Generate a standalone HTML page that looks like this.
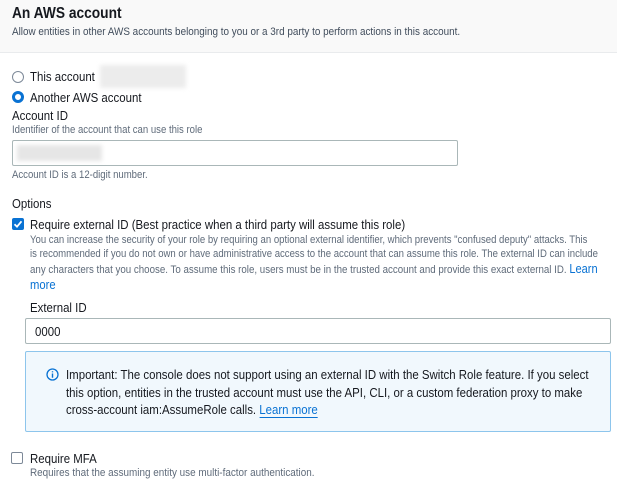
<!DOCTYPE html>
<html><head><meta charset="utf-8"><style>
*{margin:0;padding:0;box-sizing:border-box}
body{width:617px;height:488px;overflow:hidden;background:#fff;font-family:"Liberation Sans",Arial,sans-serif;color:#16191f;position:relative}
.t{position:absolute;white-space:nowrap;transform-origin:0 0;line-height:1}
.lab{font-size:13px;transform:scaleX(.88)}
.d{font-size:11px;color:#5f6b7a;transform:scaleX(.87)}
.i{font-size:13px;transform:scaleX(.88)}
a{color:#0972d3;text-decoration:none}
.box{position:absolute}
</style></head><body>
<div class="box" style="left:0;top:0;width:617px;height:53px;background:#f9f9f9;border-bottom:1px solid #e9ebed"></div>
<div class="t" style="left:12px;top:6px;font-size:16px;font-weight:bold;transform:scaleX(.86)">An AWS account</div>
<div class="t d" style="left:12px;top:27px;color:#414d5c;transform:scaleX(.9)">Allow entities in other AWS accounts belonging to you or a 3rd party to perform actions in this account.</div>

<div class="box" style="left:12px;top:71px;width:12px;height:12px;border:1.5px solid #7d8998;border-radius:50%"></div>
<div class="t lab" style="left:30px;top:70px">This account</div>
<div class="box" style="left:100px;top:65px;width:86px;height:23px;background:#ececec;filter:blur(2px)"></div>
<div class="box" style="left:12px;top:91px;width:12px;height:12px;border:3.5px solid #0972d3;border-radius:50%;background:#fff"></div>
<div class="t lab" style="left:30px;top:91px">Another AWS account</div>
<div class="t lab" style="left:12px;top:109px">Account ID</div>
<div class="t d" style="left:12px;top:125px">Identifier of the account that can use this role</div>
<div class="box" style="left:12px;top:140px;width:446px;height:26px;border:1px solid #aab7b8;border-radius:2px"></div>
<div class="box" style="left:17px;top:145px;width:85px;height:16px;background:#e6e6e6;filter:blur(2px)"></div>
<div class="t d" style="left:12px;top:170px">Account ID is a 12-digit number.</div>

<div class="t lab" style="left:12px;top:197px">Options</div>
<div class="box" style="left:12px;top:218px;width:12px;height:12px;background:#0972d3;border-radius:2px"></div>
<svg class="box" style="left:12px;top:218px" width="12" height="12"><path d="M2.5 6.2 L5 8.7 L9.5 3.3" stroke="#fff" stroke-width="1.8" fill="none"/></svg>
<div class="t lab" style="left:30px;top:218px">Require external ID (Best practice when a third party will assume this role)</div>
<div class="t d" style="left:30px;top:235px">You can increase the security of your role by requiring an optional external identifier, which prevents "confused deputy" attacks. This</div>
<div class="t d" style="left:30px;top:249px">is recommended if you do not own or have administrative access to the account that can assume this role. The external ID can include</div>
<div class="t d" style="left:30px;top:263px;transform:scaleX(.885)">any characters that you choose. To assume this role, users must be in the trusted account and provide this exact external ID. <a style="font-size:12.5px">Learn</a></div>
<div class="t" style="left:30px;top:279px;font-size:12.5px;color:#0972d3;transform:scaleX(.9)">more</div>
<div class="t lab" style="left:30px;top:301px">External ID</div>
<div class="box" style="left:25px;top:318px;width:586px;height:26px;border:1px solid #aab7b8;border-radius:2px"></div>
<div class="t lab" style="left:35px;top:325px">0000</div>

<div class="box" style="left:25px;top:351px;width:586px;height:81px;background:#f1f8fd;border:1px solid #8dc5ec;border-radius:2px"></div>
<svg class="box" style="left:46px;top:368px" width="13" height="13"><circle cx="6.5" cy="6.5" r="5.5" stroke="#0972d3" stroke-width="1.3" fill="none"/><path d="M6.5 5.5 V9.8 M6.5 3.2 V4.4" stroke="#0972d3" stroke-width="1.4"/></svg>
<div class="t i" style="left:66px;top:368px">Important: The console does not support using an external ID with the Switch Role feature. If you select</div>
<div class="t i" style="left:66px;top:386px">this option, entities in the trusted account must use the API, CLI, or a custom federation proxy to make</div>
<div class="t i" style="left:66px;top:403px">cross-account iam:AssumeRole calls. <a style="border-bottom:1px solid #0972d3">Learn more</a></div>

<div class="box" style="left:11px;top:452px;width:12px;height:12px;border:1.5px solid #7d8998;border-radius:2px"></div>
<div class="t lab" style="left:30px;top:452px">Require MFA</div>
<div class="t d" style="left:30px;top:468px;transform:scaleX(.9)">Requires that the assuming entity use multi-factor authentication.</div>
</body></html>
